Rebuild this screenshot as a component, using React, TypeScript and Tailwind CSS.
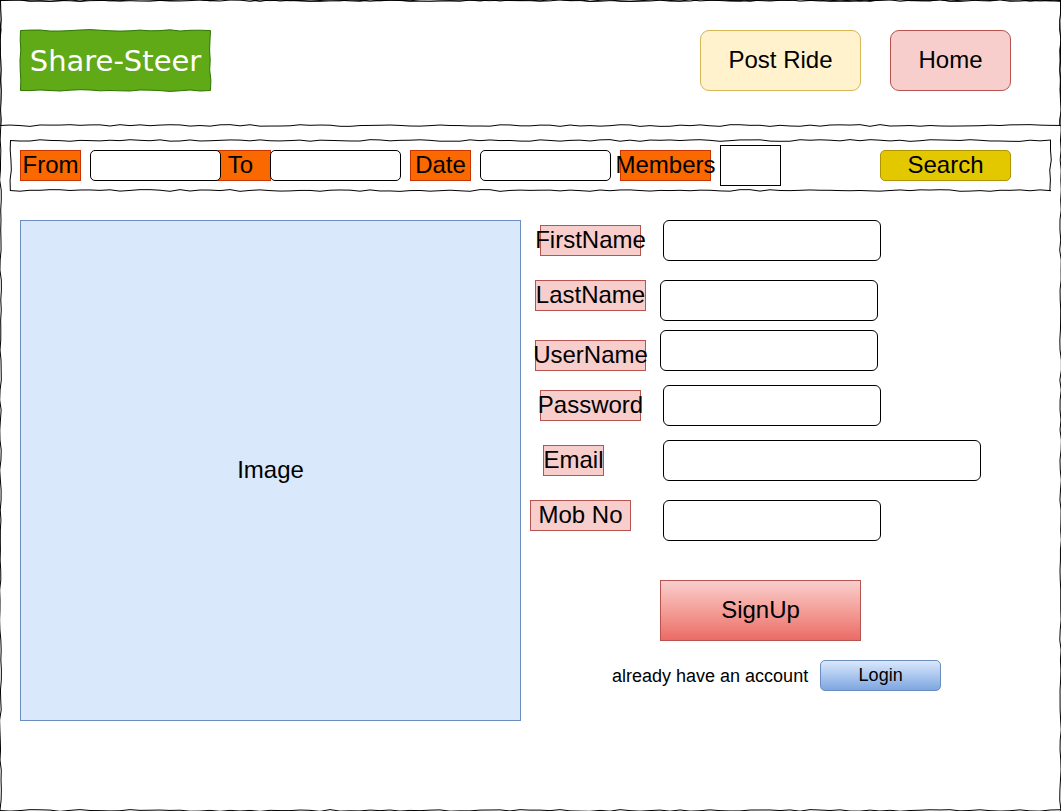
import React from "react";

const STEP = 10;

function jitter(index: number, seed: number): number {
  const v = Math.sin(index * 12.9898 + seed * 78.233) * 43758.5453;
  return (v - Math.floor(v)) * 2 - 1;
}

function offsets(count: number, seed: number): number[] {
  return Array.from({ length: count }, (_, i) => (i === 0 ? 0 : jitter(i, seed) * 0.9));
}

function horizontalPath(length: number, seed: number): string {
  return offsets(Math.ceil(length / STEP), seed)
    .map((o, i) => `${i === 0 ? "M" : "L"}${i * STEP} ${(2.5 + o).toFixed(2)}`)
    .join(" ");
}

function verticalPath(length: number, seed: number): string {
  return offsets(Math.ceil(length / STEP), seed)
    .map((o, i) => `${i === 0 ? "M" : "L"}${(2.5 + o).toFixed(2)} ${i * STEP}`)
    .join(" ");
}

function HorizontalEdge({ seed, className }: { seed: number; className: string }) {
  return (
    <svg aria-hidden="true" className={`pointer-events-none absolute inset-x-0 h-[5px] w-full ${className}`}>
      <path d={horizontalPath(4000, seed)} fill="none" stroke="#000" />
    </svg>
  );
}

function VerticalEdge({ seed, className }: { seed: number; className: string }) {
  return (
    <svg aria-hidden="true" className={`pointer-events-none absolute inset-y-0 h-full w-[5px] ${className}`}>
      <path d={verticalPath(3000, seed)} fill="none" stroke="#000" />
    </svg>
  );
}

function RoughFrame({ seed }: { seed: number }) {
  return (
    <>
      <HorizontalEdge seed={seed} className="-top-[2px]" />
      <HorizontalEdge seed={seed + 1} className="-bottom-[2px]" />
      <VerticalEdge seed={seed + 2} className="-left-[2px]" />
      <VerticalEdge seed={seed + 3} className="-right-[2px]" />
    </>
  );
}

function Logo() {
  return (
    <a
      href="#"
      className="relative flex h-[61px] w-[191px] items-center justify-center font-['DejaVu_Sans',sans-serif] text-[29px] leading-8 text-white"
    >
      <svg aria-hidden="true" className="absolute inset-0 overflow-visible" width="191" height="61" viewBox="0 0 191 61">
        <path
          d="M.5 .5L10 .1L20 0L30 1L40 1L50 .6L60 0L70 -.4L80 .2L90 .8L100 1.1L110 .8L120 .1L130 .8L140 .6L150 -.2L160 1L170 .3L180 .2L190.5 .6L190 10L189.6 20L190.2 30L189.7 40L190.9 50L190.5 60.5L180 61L170 60L160 60.8L150 61.4L140 60.6L130 60.2L120 60L110 61L100 60.8L90 60.5L80 60.8L70 60L60 59.7L50 60.2L40 61L30 60.5L20 60L10 60.6L.5 60.5L.8 50L.2 40L0 30L.8 20L.2 10Z"
          fill="#60a917"
          stroke="#2d7600"
        />
      </svg>
      <span className="relative">Share-Steer</span>
    </a>
  );
}

const tag = "flex h-[31px] shrink-0 items-center justify-center whitespace-nowrap border pb-[2px]";
const orange = "border-[#c73500] bg-[#fa6800]";
const pink = "border-[#b85450] bg-[#f8cecc]";
const searchInput = "relative h-[31px] w-[131px] shrink-0 rounded-[5px] border border-black bg-white px-2 text-lg outline-none";

type Field = {
  id: string;
  label: string;
  type: string;
  row: string;
  labelCell: string;
  labelWidth: string;
  inputCell: string;
  inputWidth: string;
};

const fields: Field[] = [
  { id: "firstName", label: "FirstName", type: "text", row: "items-center", labelCell: "pl-[10px]", labelWidth: "w-[101px]", inputCell: "pl-[3px]", inputWidth: "w-[218px]" },
  { id: "lastName", label: "LastName", type: "text", row: "mt-[19px] items-start", labelCell: "pl-[5px]", labelWidth: "w-[111px]", inputCell: "", inputWidth: "w-[218px]" },
  { id: "userName", label: "UserName", type: "text", row: "mt-[9px] items-end", labelCell: "pl-[5px]", labelWidth: "w-[111px]", inputCell: "", inputWidth: "w-[218px]" },
  { id: "password", label: "Password", type: "password", row: "mt-[14px] items-center", labelCell: "pl-[10px]", labelWidth: "w-[101px]", inputCell: "pl-[3px]", inputWidth: "w-[218px]" },
  { id: "email", label: "Email", type: "email", row: "mt-[14px] items-center", labelCell: "pl-[13px]", labelWidth: "w-[61px]", inputCell: "pl-[3px]", inputWidth: "w-[318px]" },
  { id: "mobile", label: "Mob No", type: "tel", row: "mt-[19px] items-start", labelCell: "", labelWidth: "w-[101px]", inputCell: "pl-[3px]", inputWidth: "w-[218px]" },
];

export default function App() {
  return (
    <div className="relative min-h-screen overflow-hidden bg-white pb-[90px] font-['Liberation_Sans',Arial,sans-serif] text-2xl leading-7 text-black">
      <RoughFrame seed={3} />

      <header className="relative flex items-start justify-between pt-[30px] pr-[50px] pb-[35px] pl-5">
        <Logo />
        <nav className="flex gap-[29px]">
          <button type="button" className="h-[61px] w-[161px] rounded-[9px] border border-[#d6b656] bg-[#fff2cc] pb-[2px]">
            Post Ride
          </button>
          <button type="button" className="h-[61px] w-[121px] rounded-[9px] border border-[#b85450] bg-[#f8cecc] pb-[2px]">
            Home
          </button>
        </nav>
        <RoughFrame seed={11} />
      </header>

      <form
        onSubmit={(e) => e.preventDefault()}
        className="relative mt-[14px] mr-[10px] ml-[10px] flex h-[51px] items-center pr-10 pl-[10px]"
      >
        <RoughFrame seed={21} />
        <label htmlFor="from" className={`${tag} ${orange} w-[61px]`}>From</label>
        <input id="from" type="text" className={`${searchInput} z-10 ml-[9px]`} />
        <label htmlFor="to" className={`${tag} ${orange} -ml-[11px] w-[61px]`}>To</label>
        <input id="to" type="text" className={`${searchInput} -ml-px`} />
        <label htmlFor="date" className={`${tag} ${orange} ml-[9px] w-[61px]`}>Date</label>
        <input id="date" type="text" className={`${searchInput} ml-[9px]`} />
        <label htmlFor="members" className={`${tag} ${orange} ml-[9px] w-[91px]`}>Members</label>
        <input
          id="members"
          type="text"
          className="ml-[9px] h-[41px] w-[61px] shrink-0 border border-black bg-white px-2 text-lg outline-none"
        />
        <button
          type="submit"
          className="ml-auto flex h-[31px] w-[131px] shrink-0 items-center justify-center rounded-[5px] border border-[#b09500] bg-[#e3c800] pb-[2px]"
        >
          Search
        </button>
      </form>

      <main className="mt-[29px] flex items-start gap-[9px] pl-5">
        <div
          role="img"
          aria-label="Image"
          className="flex h-[501px] w-[501px] shrink-0 items-center justify-center border border-[#6c8ebf] bg-[#dae8fc] pb-[2px]"
        >
          Image
        </div>

        <form onSubmit={(e) => e.preventDefault()} className="flex flex-1 flex-col">
          {fields.map((f) => (
            <div key={f.id} className={`grid h-[41px] grid-cols-[130px_1fr] ${f.row}`}>
              <div className={f.labelCell}>
                <label htmlFor={f.id} className={`${tag} ${pink} ${f.labelWidth}`}>{f.label}</label>
              </div>
              <div className={`flex ${f.inputCell}`}>
                <input
                  id={f.id}
                  type={f.type}
                  className={`h-[41px] rounded-md border border-black bg-white px-3 text-lg outline-none ${f.inputWidth}`}
                />
              </div>
            </div>
          ))}

          <button
            type="submit"
            className="mt-[39px] ml-[130px] h-[61px] w-[201px] border border-[#b85450] bg-linear-to-b from-[#f8cecc] to-[#ea6b66] pb-[2px]"
          >
            SignUp
          </button>

          <div className="mt-[19px] flex items-center gap-3 pl-[82px] text-lg leading-5">
            <p className="whitespace-nowrap">already have an account</p>
            <button
              type="button"
              className="h-[31px] w-[121px] rounded-[5px] border border-[#6c8ebf] bg-linear-to-b from-[#dae8fc] to-[#7ea6e0] pb-[2px]"
            >
              Login
            </button>
          </div>
        </form>
      </main>
    </div>
  );
}
